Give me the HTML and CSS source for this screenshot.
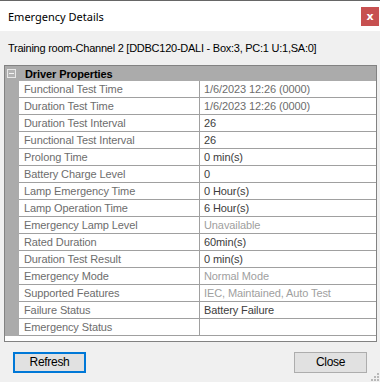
FILE: index.html
```html
<!DOCTYPE html>
<html>
<head>
<meta charset="utf-8">
<link rel="stylesheet" href="styles.css">
</head>
<body>
<div class="window">
  <div class="titlebar">
    <span class="title">Emergency Details</span>
    <span class="close-x">x</span>
  </div>
  <div class="subtitle">Training room-Channel 2 [DDBC120-DALI - Box:3, PC:1 U:1,SA:0]</div>
  <div class="grid">
    <div class="cat">
      <span class="toggle"><span class="minus"></span></span>
      <span class="cat-name">Driver Properties</span>
    </div>
    <div class="rows">
      <div class="row"><div class="name">Functional Test Time</div><div class="val c-mid">1/6/2023 12:26 (0000)</div></div>
      <div class="row"><div class="name">Duration Test Time</div><div class="val c-mid">1/6/2023 12:26 (0000)</div></div>
      <div class="row"><div class="name">Duration Test Interval</div><div class="val c-dark">26</div></div>
      <div class="row"><div class="name">Functional Test Interval</div><div class="val c-dark">26</div></div>
      <div class="row"><div class="name">Prolong Time</div><div class="val c-dark">0 min(s)</div></div>
      <div class="row"><div class="name">Battery Charge Level</div><div class="val c-dark">0</div></div>
      <div class="row"><div class="name">Lamp Emergency Time</div><div class="val c-dark">0 Hour(s)</div></div>
      <div class="row"><div class="name">Lamp Operation Time</div><div class="val c-dark">6 Hour(s)</div></div>
      <div class="row"><div class="name">Emergency Lamp Level</div><div class="val c-light">Unavailable</div></div>
      <div class="row"><div class="name">Rated Duration</div><div class="val c-dark">60min(s)</div></div>
      <div class="row"><div class="name">Duration Test Result</div><div class="val c-dark">0 min(s)</div></div>
      <div class="row"><div class="name">Emergency Mode</div><div class="val c-light">Normal Mode</div></div>
      <div class="row"><div class="name">Supported Features</div><div class="val c-light">IEC, Maintained, Auto Test</div></div>
      <div class="row"><div class="name">Failure Status</div><div class="val c-dark">Battery Failure</div></div>
      <div class="row"><div class="name">Emergency Status</div><div class="val c-dark"></div></div>
    </div>
  </div>
  <div class="buttons">
    <button class="btn btn-default">Refresh</button>
    <button class="btn">Close</button>
  </div>
  <div class="grip">
    <svg width="9" height="9" viewBox="0 0 9 9"><g fill="#b8b8b8"><rect x="7" y="1" width="2" height="2"/><rect x="4" y="4" width="2" height="2"/><rect x="7" y="4" width="2" height="2"/><rect x="1" y="7" width="2" height="2"/><rect x="4" y="7" width="2" height="2"/><rect x="7" y="7" width="2" height="2"/></g></svg>
  </div>
</div>
</body>
</html>
```

FILE: styles.css
```css
html, body {
  margin: 0;
  padding: 0;
}
body {
  width: 380px;
  height: 382px;
  overflow: hidden;
  background: #f0f0f0;
  font-family: "Liberation Sans", Arial, sans-serif;
}
.window {
  position: relative;
  display: flex;
  flex-direction: column;
  height: 382px;
}
.titlebar {
  height: 30px;
  border-top: 1px solid #666666;
  background: #ffffff;
  display: flex;
  align-items: center;
  justify-content: space-between;
}
.title {
  padding-left: 8px;
  font-family: "Noto Sans", sans-serif;
  font-size: 11px;
  color: #000;
}
.close-x {
  width: 18px;
  height: 19px;
  margin-right: 1px;
  background: #c75050;
  color: #fff;
  font-weight: bold;
  font-size: 11px;
  display: flex;
  align-items: center;
  justify-content: center;
  font-family: "DejaVu Sans", sans-serif;
}
.subtitle {
  height: 34px;
  display: flex;
  align-items: center;
  padding-left: 8px;
  font-family: "Liberation Sans", Arial, sans-serif;
  font-size: 11px;
  letter-spacing: -0.25px;
  color: #000;
}
.grid {
  margin: 0 3px 0 4px;
  border: 1px solid #828282;
  background: #ffffff;
  height: 275px;
  font-size: 11px;
  letter-spacing: -0.1px;
}
.cat {
  height: 15px;
  background: #ababab;
  display: flex;
  align-items: center;
}
.toggle {
  width: 7px;
  height: 7px;
  margin-left: 2px;
  border: 1px solid #e8e8e8;
  background: #b4b4b4;
  position: relative;
}
.minus {
  position: absolute;
  left: 1px;
  top: 3px;
  width: 5px;
  height: 1px;
  background: #f4f4f4;
}
.cat-name {
  margin-left: 9px;
  font-weight: bold;
  color: #000;
}
.rows {
  display: flex;
  flex-direction: column;
}
.row {
  display: grid;
  grid-template-columns: 14px 181px 1fr;
  height: 17px;
}
.row::before {
  content: "";
  background: #ababab;
}
.name, .val {
  border-bottom: 1px solid #a0a0a0;
  display: flex;
  align-items: center;
  white-space: nowrap;
  overflow: hidden;
}
.name {
  padding-left: 5px;
  color: #6d6d6d;
  border-right: 1px solid #a0a0a0;
}
.val {
  padding-left: 4px;
}
.c-mid { color: #6d6d6d; }
.c-dark { color: #3c3c3c; }
.c-light { color: #a0a0a0; }
.buttons {
  display: flex;
  justify-content: space-between;
  padding: 10px 13px 0 13px;
}
.btn {
  height: 21px;
  width: 73px;
  background: #e1e1e1;
  border: 1px solid #adadad;
  font-family: "Liberation Sans", Arial, sans-serif;
  font-size: 12px;
  letter-spacing: -0.3px;
  color: #000;
  padding: 0;
  line-height: 17px;
}
.btn-default {
  border: 2px solid #0078d7;
}
.grip {
  position: absolute;
  right: 1px;
  bottom: 1px;
  width: 9px;
  height: 9px;
}
.grip svg { display: block; }
```
